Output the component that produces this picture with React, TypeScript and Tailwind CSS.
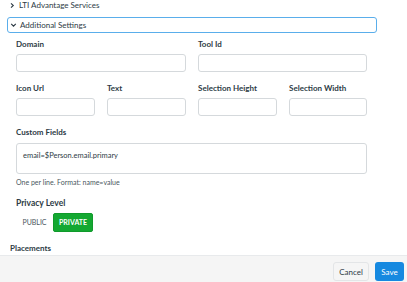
import React from "react";

const Label = ({ children }: { children: React.ReactNode }) => (
  <div className="text-[8px] font-bold leading-[10px] text-[#2d3b45] h-[10px]">{children}</div>
);

const Input = ({ w }: { w: string }) => (
  <div className={`${w} h-[18px] mt-[5px] border border-[#d5d9dc] rounded-[3px] bg-white`} />
);

export default function App() {
  return (
    <div className="w-[407px] h-[282px] flex flex-col bg-white overflow-hidden text-[#2d3b45]" style={{ fontFamily: "Lato, 'Open Sans', sans-serif" }}>
      <div className="h-[255px] overflow-hidden">
        <div className="h-[11px] flex items-center pl-[9px] text-[8px] leading-[11px]">
          <svg width="6" height="7" viewBox="0 0 6 7" className="mr-[4px]"><path d="M2 1.3 L4.3 3.5 L2 5.7" fill="none" stroke="#2d3b45" strokeWidth="1.1" /></svg>
          <span>LTI Advantage Services</span>
        </div>
        <div className="mt-[6px] ml-[7px] w-[370px] h-[16px] border-[1.5px] border-[#5aaeeb] rounded-[3px] flex items-center pl-[1px] text-[8px]">
          <svg width="7" height="6" viewBox="0 0 7 6" className="mr-[3px] ml-[1px]"><path d="M1.2 1.8 L3.5 4.2 L5.8 1.8" fill="none" stroke="#2d3b45" strokeWidth="1.1" /></svg>
          <span>Additional Settings</span>
        </div>
        <div className="pl-[16px] pt-[6px]">
          <div className="flex gap-[12px]">
            <div><Label>Domain</Label><Input w="w-[170px]" /></div>
            <div><Label>Tool Id</Label><Input w="w-[169px]" /></div>
          </div>
          <div className="flex gap-[12px] mt-[11px]">
            <div><Label>Icon Url</Label><Input w="w-[79px]" /></div>
            <div><Label>Text</Label><Input w="w-[79px]" /></div>
            <div><Label>Selection Height</Label><Input w="w-[79px]" /></div>
            <div><Label>Selection Width</Label><Input w="w-[78px]" /></div>
          </div>
          <div className="mt-[11px]"><Label>Custom Fields</Label></div>
          <div className="mt-[6px] w-[351px] h-[31px] border border-[#d5d9dc] rounded-[3px] pl-[6px] pt-[6px] text-[7.5px] leading-[11px]">email=$Person.email.primary</div>
          <div className="mt-[4px] text-[7px] leading-[9px] text-[#4a5760]">One per line. Format: name=value</div>
          <div className="mt-[11px] text-[8.5px] font-bold leading-[11px]">Privacy Level</div>
          <div className="mt-[4px] flex items-center">
            <div className="h-[19px] w-[37px] flex items-center justify-center text-[7px] text-[#4a5760]">PUBLIC</div>
            <div className="h-[19px] w-[40px] flex items-center justify-center bg-[#14a832] rounded-[2px] text-[7px] text-white font-bold border border-[#109a2b]">PRIVATE</div>
          </div>
        </div>
        <div className="pl-[10px] mt-[11px] text-[8px] font-bold leading-[10px]">Placements</div>
      </div>
      <div className="flex-1 bg-[#f5f5f5] border-t border-[#e8eaec] flex items-start justify-end pt-[6px] pr-[3px] gap-[6px]">
        <div className="h-[19px] w-[36px] flex items-center justify-center bg-[#f5f5f5] border border-[#e3e5e7] rounded-[3px] text-[8px] text-[#2d3b45]">Cancel</div>
        <div className="h-[19px] w-[29px] flex items-center justify-center bg-[#1689e0] rounded-[3px] text-[8px] text-white">Save</div>
      </div>
    </div>
  );
}
